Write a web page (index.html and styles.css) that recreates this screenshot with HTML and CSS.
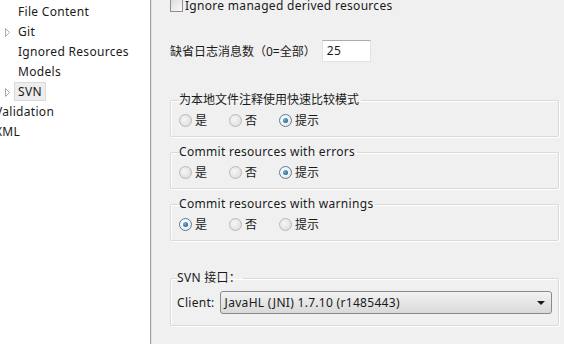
FILE: index.html
```html
<!DOCTYPE html>
<html lang="zh-CN">
<head>
    <meta charset="UTF-8">
    <title>SVN</title>
    <link rel="stylesheet" href="styles.css">
</head>
<body>
    <div class="tree">
        <div class="node child">File Content</div>
        <div class="node child"><svg class="twisty" width="6" height="9" viewBox="0 0 6 9"><path d="M0.5 0.5 L4.5 4.5 L0.5 8.5 Z" fill="#ffffff" stroke="#a8a8a8"/></svg>Git</div>
        <div class="node child">Ignored Resources</div>
        <div class="node child">Models</div>
        <div class="node child"><svg class="twisty" width="6" height="9" viewBox="0 0 6 9"><path d="M0.5 0.5 L4.5 4.5 L0.5 8.5 Z" fill="#ffffff" stroke="#a8a8a8"/></svg><span class="selected">SVN</span></div>
        <div class="node root">Validation</div>
        <div class="node root">XML</div>
    </div>

    <div class="page">
        <div class="check-row">
            <span class="checkbox"></span>
            <span>Ignore managed derived resources</span>
        </div>

        <div class="field-row">
            <span class="zh">缺省日志消息数（0=全部）</span>
            <span class="text-input">25</span>
        </div>

        <fieldset class="group">
            <legend class="zh">为本地文件注释使用快速比较模式</legend>
            <div class="radios zh">
                <span class="radio-item"><span class="radio"></span>是</span>
                <span class="radio-item"><span class="radio"></span>否</span>
                <span class="radio-item"><span class="radio checked"></span>提示</span>
            </div>
        </fieldset>

        <fieldset class="group">
            <legend>Commit resources with errors</legend>
            <div class="radios zh">
                <span class="radio-item"><span class="radio"></span>是</span>
                <span class="radio-item"><span class="radio"></span>否</span>
                <span class="radio-item"><span class="radio checked"></span>提示</span>
            </div>
        </fieldset>

        <fieldset class="group">
            <legend>Commit resources with warnings</legend>
            <div class="radios zh">
                <span class="radio-item"><span class="radio checked"></span>是</span>
                <span class="radio-item"><span class="radio"></span>否</span>
                <span class="radio-item"><span class="radio"></span>提示</span>
            </div>
        </fieldset>

        <fieldset class="group client-group">
            <legend>SVN 接口：</legend>
            <div class="client-row">
                <span>Client:</span>
                <div class="combo">
                    <span>JavaHL (JNI) 1.7.10 (r1485443)</span>
                    <span class="arrow"></span>
                </div>
            </div>
        </fieldset>
    </div>
</body>
</html>
```

FILE: styles.css
```css
body {
    margin: 0;
    height: 344px;
    overflow: hidden;
    display: flex;
    font-family: "Noto Sans", "Noto Sans CJK SC", sans-serif;
    font-size: 12px;
    letter-spacing: 0.3px;
    color: #1a1a1a;
    background-color: #f0f0f0;
}

.zh {
    letter-spacing: 0;
}

.tree {
    width: 150px;
    flex-shrink: 0;
    background-color: #ffffff;
    border-right: 1px solid #a0a0a0;
    box-shadow: 1px 0 0 #e3e3e3;
    padding-top: 2px;
}

.node {
    height: 20px;
    line-height: 20px;
    white-space: nowrap;
    position: relative;
}

.node.child {
    padding-left: 18px;
}

.node.root {
    margin-left: -5px;
}

.twisty {
    position: absolute;
    left: 5px;
    top: 6px;
}

.selected {
    display: inline-block;
    line-height: 17px;
    padding: 0 3px;
    margin-left: -4px;
    background-color: #ededed;
    border: 1px solid #dadada;
}

.page {
    flex: 1;
    min-width: 0;
    padding: 0 5px 0 19px;
}

.check-row {
    display: flex;
    align-items: center;
    gap: 2px;
    margin-top: -3px;
    height: 16px;
}

.checkbox {
    width: 11px;
    height: 11px;
    border: 1px solid #8f8f8f;
    background: linear-gradient(135deg, #dcdcdc, #fbfbfb);
}

.field-row {
    display: flex;
    align-items: center;
    gap: 6px;
    margin-top: 27px;
}

.text-input {
    width: 43px;
    height: 20px;
    line-height: 20px;
    padding-left: 4px;
    background-color: #ffffff;
    border: 1px solid #e2e2e2;
    border-top-color: #ababab;
}

.group {
    min-width: 0;
    margin: 30px 0 0 0;
    padding: 0 8px 0 8px;
    border: 1px solid #d9d9d9;
    border-radius: 2px;
    box-shadow: inset 1px 1px 0 #ffffff, 1px 1px 0 #ffffff;
    height: 45px;
    box-sizing: border-box;
}

.group + .group {
    margin-top: 7px;
}

.group legend {
    padding: 0 2px 0 0;
    margin-left: 0;
    line-height: 16px;
}

.radios {
    display: flex;
    align-items: center;
    margin-top: 3px;
}

.radio-item {
    display: flex;
    align-items: center;
    gap: 3px;
    width: 50px;
}

.radio {
    width: 11px;
    height: 11px;
    border-radius: 50%;
    border: 1px solid #b8b8b8;
    background: radial-gradient(circle at 40% 40%, #f6f6f6, #d8d8d8);
    position: relative;
}

.radio.checked {
    border-color: #5a7d94;
    background: radial-gradient(circle at 40% 40%, #ffffff, #dde4ea);
}

.radio.checked::after {
    content: "";
    position: absolute;
    left: 3px;
    top: 3px;
    width: 5px;
    height: 5px;
    border-radius: 50%;
    background: radial-gradient(circle at 35% 35%, #6fb1d8, #1b4d6e);
}

.group.client-group {
    margin-top: 29px;
    height: 56px;
    padding: 0 6px 0 6px;
}

.client-row {
    display: flex;
    align-items: center;
    gap: 5px;
    margin-top: 5px;
}

.combo {
    flex: 1;
    height: 23px;
    box-sizing: border-box;
    display: flex;
    align-items: center;
    justify-content: space-between;
    padding: 0 6px 0 4px;
    border: 1px solid #8a8a8a;
    border-radius: 3px;
    background: linear-gradient(#f3f3f3, #e6e6e6 50%, #d9d9d9);
}

.arrow {
    width: 0;
    height: 0;
    border-left: 4px solid transparent;
    border-right: 4px solid transparent;
    border-top: 4px solid #1a1a1a;
}
```
